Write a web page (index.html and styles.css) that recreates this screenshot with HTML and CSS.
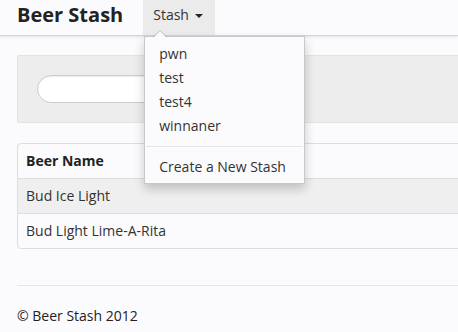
FILE: index.html
```html
<!DOCTYPE html>
<html lang="en">
<head>
    <meta charset="UTF-8">
    <meta name="viewport" content="width=device-width, initial-scale=1.0">
    <title>Beer Stash</title>
    <link rel="stylesheet" href="styles.css">
</head>
<body>
    <div class="navbar">
        <div class="container nav-inner">
            <a class="brand" href="#">Beer Stash</a>
            <ul class="nav">
                <li class="dropdown open">
                    <a class="dropdown-toggle" href="#">Stash <b class="caret"></b></a>
                    <ul class="dropdown-menu">
                        <li><a href="#">pwn</a></li>
                        <li><a href="#">test</a></li>
                        <li><a href="#">test4</a></li>
                        <li><a href="#">winnaner</a></li>
                        <li class="divider"></li>
                        <li><a href="#">Create a New Stash</a></li>
                    </ul>
                </li>
            </ul>
        </div>
    </div>

    <div class="container">
        <div class="well">
            <form class="search-form">
                <input type="text" class="search-query">
            </form>
        </div>

        <table class="beer-table">
            <thead>
                <tr><th>Beer Name</th></tr>
            </thead>
            <tbody>
                <tr class="odd"><td>Bud Ice Light</td></tr>
                <tr><td>Bud Light Lime-A-Rita</td></tr>
            </tbody>
        </table>

        <footer class="footer">
            <p>&copy; Beer Stash 2012</p>
        </footer>
    </div>
</body>
</html>
```

FILE: styles.css
```css
:root {
    --background: #fbfbfd;
    --foreground: #333333;
    --muted: #ededed;
    --border: #dddddd;
}

html, body {
    margin: 0;
    padding: 0;
}

body {
    font-family: "Open Sans", "Liberation Sans", sans-serif;
    font-size: 14px;
    line-height: 20px;
    color: var(--foreground);
    background-color: var(--background);
    overflow-x: hidden;
}

a {
    color: var(--foreground);
    text-decoration: none;
}

.container {
    width: 940px;
    margin-left: 17px;
}

/* navbar */

.navbar {
    height: 35px;
    border-bottom: 1px solid #d4d4d4;
    box-shadow: 0 1px 3px rgba(0, 0, 0, 0.1);
    background-color: var(--background);
    position: relative;
    z-index: 10;
}

.nav-inner {
    display: flex;
    align-items: stretch;
    height: 35px;
}

.brand {
    font-size: 20px;
    font-weight: bold;
    line-height: 30px;
    margin-right: 20px;
    color: #222;
}

.nav {
    list-style: none;
    margin: 0;
    padding: 0;
    display: flex;
}

.dropdown {
    position: relative;
}

.dropdown-toggle {
    display: flex;
    align-items: center;
    box-sizing: border-box;
    height: 35px;
    padding: 0 12px 5px 10px;
    background-color: #ebebeb;
    color: #333;
}

.caret {
    display: inline-block;
    width: 0;
    height: 0;
    margin-left: 6px;
    margin-top: 2px;
    border-top: 4px solid #222;
    border-left: 4px solid transparent;
    border-right: 4px solid transparent;
}

.dropdown-menu {
    position: absolute;
    top: 36px;
    left: 1px;
    width: 159px;
    margin: 0;
    padding: 5px 0 4px;
    list-style: none;
    background-color: var(--background);
    border: 1px solid rgba(0, 0, 0, 0.2);
    box-shadow: 0 5px 10px rgba(0, 0, 0, 0.2);
}

.dropdown-menu::before {
    content: "";
    position: absolute;
    top: -7px;
    left: 8px;
    border-left: 7px solid transparent;
    border-right: 7px solid transparent;
    border-bottom: 7px solid rgba(0, 0, 0, 0.2);
}

.dropdown-menu::after {
    content: "";
    position: absolute;
    top: -6px;
    left: 9px;
    border-left: 6px solid transparent;
    border-right: 6px solid transparent;
    border-bottom: 6px solid var(--background);
}

.dropdown-menu a {
    display: block;
    padding: 2px 14px;
    line-height: 20px;
    color: #333;
}

.dropdown-menu .divider {
    height: 1px;
    margin: 8px 1px 8px;
    background-color: #e5e5e5;
}

/* search well */

.well {
    margin-top: 19px;
    padding: 19px;
    background-color: var(--muted);
    border: 1px solid #e3e3e3;
    border-radius: 2px;
    margin-bottom: 20px;
}

.search-form {
    margin: 0;
}

.search-query {
    display: block;
    width: 190px;
    height: 28px;
    box-sizing: border-box;
    padding: 4px 14px;
    border: 1px solid #cccccc;
    border-radius: 14px;
    background-color: #fff;
    box-shadow: inset 0 1px 1px rgba(0, 0, 0, 0.075);
    font-family: inherit;
    font-size: 14px;
}

/* table */

.beer-table {
    width: 100%;
    border-collapse: separate;
    border-spacing: 0;
    border: 1px solid var(--border);
    border-radius: 4px;
    margin-bottom: 36px;
}

.beer-table th,
.beer-table td {
    text-align: left;
    padding: 7px 8px;
    line-height: 20px;
}

.beer-table td {
    border-top: 1px solid var(--border);
}

.beer-table th {
    font-weight: bold;
    color: #222;
}

.beer-table .odd td {
    background-color: #efefef;
}

/* footer */

.footer {
    border-top: 1px solid #e5e5e5;
    padding-top: 20px;
}

.footer p {
    margin: 0;
    color: #222;
}
```
